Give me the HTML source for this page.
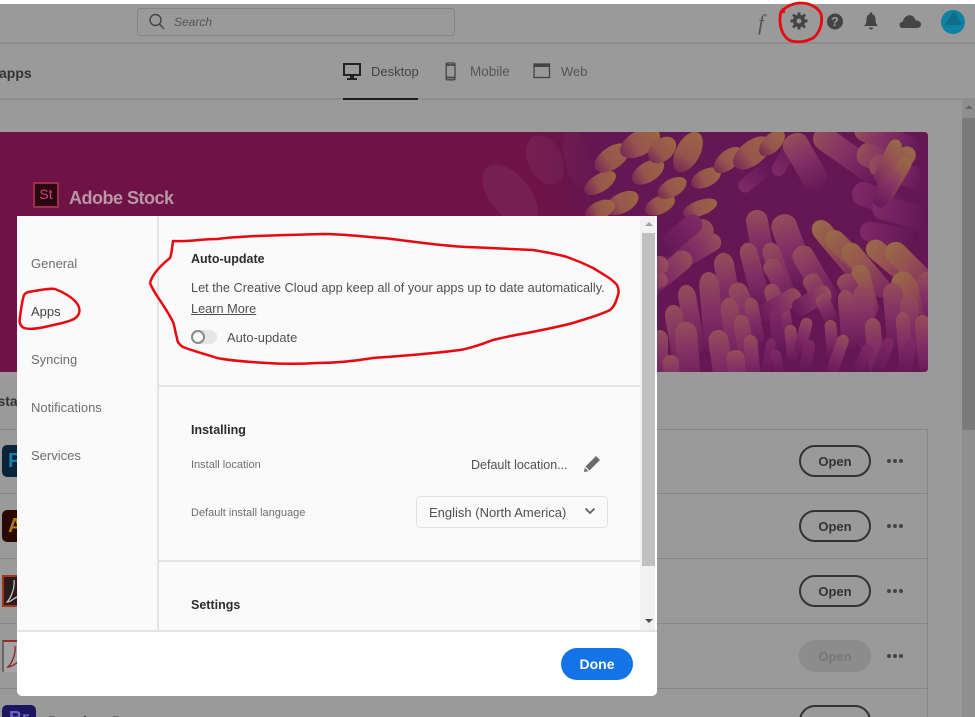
<!DOCTYPE html>
<html lang="en"><head><meta charset="utf-8"><title>Creative Cloud preferences</title>
<style>
html,body{margin:0;padding:0;width:975px;height:717px;overflow:hidden}
#w{width:975px;height:717px;position:relative;overflow:hidden;background:#9a9a9a;font-family:"Liberation Sans",sans-serif;color:#444}
.a{position:absolute}
.t{position:absolute;white-space:nowrap;line-height:16px}
.open{position:absolute;left:799px;width:68px;height:28px;border:2px solid #333;border-radius:16px;text-align:center;font:bold 13px/29px "Liberation Sans",sans-serif;color:#333}
.dots{position:absolute;left:887px;width:18px;height:4px}
.dots i{float:left;width:4px;height:4px;border-radius:50%;background:#444;margin-right:2px}
.rl{position:absolute;left:0;width:927px;height:1px;background:#868686}
.nav{position:absolute;left:31px;font-size:13px;color:#6e6e6e;line-height:16px}
</style></head><body><div id="w">
<div class="a" style="left:0;top:0;width:975px;height:4px;background:#fff"></div>
<div class="a" style="left:0;top:42px;width:975px;height:2px;background:#8d8d8d"></div>
<div class="a" style="left:0;top:98px;width:975px;height:2px;background:#8d8d8d"></div>
<div class="a" style="left:137px;top:8px;width:316px;height:26px;border:1px solid #858585;border-radius:4px"></div>
<svg class="a" style="left:149px;top:13px" width="16" height="17" viewBox="0 0 16 17" fill="none" stroke="#444" stroke-width="1.400"><circle cx="6.500" cy="7" r="5.500"/><path d="M10.500 11l4.500 5"/></svg>
<div class="t" style="left:174px;top:14px;font-size:12px;font-style:italic;color:#555">Search</div>

<svg class="a" style="left:750px;top:5px" width="225" height="36" viewBox="750 5 225 36">
<text x="758" y="30" font-family="Liberation Serif,serif" font-style="italic" font-size="22" fill="#555">f</text>
<g fill="#444"><circle cx="799" cy="21" r="6.200"/><path d="M797.500 12.500h3v3h-3zM797.500 26.500h3v3h-3zM790.500 19.500h3v3h-3zM804.500 19.500h3v3h-3z"/><path d="M792 15.500l2-2 3 3-2 2zM804 13.500l2 2-3 3-2-2zM794 28.500l-2-2 3-3 2 2zM806 26.500l-2 2-3-3 2-2z"/></g>
<circle cx="799" cy="21" r="2.400" fill="#999"/>
<circle cx="835" cy="21.500" r="8" fill="#444"/>
<text x="835" y="26" font-size="12.500" font-weight="bold" text-anchor="middle" fill="#999" font-family="Liberation Sans,sans-serif">?</text>
<path fill="#444" d="M871 14c3.500 0 4.500 2.500 4.500 5.500 0 3.500 1 5 2.500 6.500h-14c1.500-1.500 2.500-3 2.500-6.500 0-3 1-5.500 4.500-5.500zM869.800 13.500a1.200 1.200 0 1 1 2.400 0v1h-2.400zM869 27.500h4a2 2 0 0 1-4 0z"/>
<path fill="#444" d="M903 28c-2.500 0-3.500-1.500-3.500-3.300 0-1.800 1.500-3 3.300-3 .8-3.800 3.500-6.500 6.700-6.500 3.300 0 5.500 2.500 6.300 5.300 2.600-.2 5.200 1 5.200 3.800 0 2.300-1.500 3.700-3.800 3.700z"/>
<circle cx="953" cy="22" r="12" fill="#0d82a2"/>
<path d="M954 11l8.500 14h-18z" fill="#0c6f88"/>
</svg>

<div class="t" style="left:-1px;top:65px;font-size:14px;font-weight:bold;color:#333">apps</div>
<svg class="a" style="left:343px;top:62px" width="20" height="20" viewBox="0 0 20 20"><path fill="#222" d="M0 1h18v13H11v2h3v2H4v-2h3v-2H0zM2 3v9h14V3z"/></svg>
<div class="t" style="left:371px;top:64px;font-size:13px;color:#444">Desktop</div>
<div class="a" style="left:343px;top:98px;width:75px;height:2px;background:#1c1c1c"></div>
<svg class="a" style="left:445px;top:62px" width="12" height="19" viewBox="0 0 12 19" fill="none" stroke="#444" stroke-width="1.300"><rect x="1.200" y="1" width="8.800" height="16.800" rx="1"/><path d="M1 3h9M1 15.500h9" stroke-width="1.800"/></svg>
<div class="t" style="left:470px;top:64px;font-size:13.500px;color:#555">Mobile</div>
<svg class="a" style="left:533px;top:63px" width="18" height="16" viewBox="0 0 18 16" fill="none" stroke="#444" stroke-width="1.300"><rect x="1" y="1" width="15.500" height="13.500"/><path d="M1 2.500h15.500" stroke-width="3"/></svg>
<div class="t" style="left:561px;top:64px;font-size:13px;color:#555">Web</div>

<div class="a" style="left:962px;top:100px;width:13px;height:617px;background:#8f8f8f"></div>
<div class="a" style="left:962px;top:118px;width:13px;height:312px;background:#7a7a7a"></div>
<div class="a" style="left:965px;top:105px;width:0;height:0;border:4px solid transparent;border-bottom:4px solid #666;border-top:0"></div>

<svg class="a" style="left:0;top:132px" width="928" height="240" viewBox="0 132 928 240">
<defs>
<clipPath id="hc"><rect x="-5" y="132" width="933" height="240" rx="4"/></clipPath>
<linearGradient id="go" x1="0" y1="0" x2="0" y2="1"><stop offset="0" stop-color="#a5763e"/><stop offset=".6" stop-color="#a0624a"/><stop offset="1" stop-color="#7a2b55"/></linearGradient>
<linearGradient id="gm" x1="0" y1="0" x2="0" y2="1"><stop offset="0" stop-color="#9e5a58"/><stop offset=".45" stop-color="#873468"/><stop offset="1" stop-color="#641758"/></linearGradient>
<linearGradient id="gy" x1="0" y1="0" x2="0" y2="1"><stop offset="0" stop-color="#a27c42"/><stop offset=".4" stop-color="#9f5e50"/><stop offset="1" stop-color="#7a2560"/></linearGradient>
<linearGradient id="gp" x1="0" y1="0" x2="0" y2="1"><stop offset="0" stop-color="#842c6a"/><stop offset="1" stop-color="#5a1252"/></linearGradient>
<linearGradient id="fd" gradientUnits="userSpaceOnUse" x1="535" y1="0" x2="600" y2="0"><stop offset="0" stop-color="#fff" stop-opacity="0"/><stop offset="1" stop-color="#fff"/></linearGradient>
<mask id="mk"><rect x="0" y="132" width="928" height="240" fill="url(#fd)"/></mask>
<ellipse id="o" cx="0" cy="0" rx="11" ry="20" fill="url(#go)"/>
<rect id="m" x="-10" y="0" width="20" height="60" rx="10" fill="url(#gm)"/>
<rect id="y" x="-10" y="0" width="20" height="60" rx="10" fill="url(#gy)"/>
<rect id="p" x="-10" y="0" width="20" height="60" rx="10" fill="url(#gp)"/>
</defs>
<rect x="-5" y="132" width="933" height="240" rx="4" fill="#6f1347"/>
<g clip-path="url(#hc)">
<g fill="#7a2656" opacity=".7"><ellipse transform="rotate(-25 545 160)" cx="545" cy="160" rx="17" ry="26"/><ellipse transform="rotate(-15 578 160)" cx="578" cy="160" rx="13" ry="30"/><ellipse transform="rotate(-40 510 195)" cx="510" cy="195" rx="20" ry="36"/></g>
<g mask="url(#mk)">
<rect x="440" y="132" width="490" height="240" fill="#611450"/>
<use href="#o" transform="translate(600 183) rotate(58) scale(.8 .9)"/><use href="#o" transform="translate(612 158) rotate(55)"/><use href="#o" transform="translate(640 143) rotate(60) scale(1.100)"/><use href="#o" transform="translate(648 172) rotate(58) scale(.9)"/><use href="#o" transform="translate(622 203) rotate(62) scale(.9)"/>
<use href="#o" transform="translate(600 210) rotate(65) scale(.8)"/><use href="#o" transform="translate(660 205) rotate(65) scale(.8)"/>
<use href="#o" transform="translate(662 150) rotate(50) scale(1 .8)"/><use href="#o" transform="translate(688 152) rotate(28) scale(1.100)"/><use href="#o" transform="translate(672 188) rotate(60) scale(.8)"/><use href="#o" transform="translate(706 178) rotate(64) scale(.8)"/><use href="#o" transform="translate(728 160) rotate(50) scale(.85)"/><use href="#o" transform="translate(752 153) rotate(52) scale(1.100)"/><use href="#o" transform="translate(772 143) rotate(45) scale(.8)"/><use href="#o" transform="translate(700 208) rotate(70) scale(.7 .9)"/>
<use href="#p" transform="translate(740 190) rotate(-130) scale(.7)"/><use href="#p" transform="translate(775 175) rotate(-150) scale(.7)"/>
<use href="#m" transform="translate(790 135) rotate(-30) scale(1.300 1)"/><use href="#m" transform="translate(815 132) rotate(-55) scale(1.200 1.300)"/><use href="#m" transform="translate(858 150) rotate(-65) scale(1.200 1)"/><use href="#m" transform="translate(855 127) rotate(-70) scale(1.100)"/><use href="#p" transform="translate(853 190) rotate(-70) scale(1.200 1)"/><use href="#m" transform="translate(870 162) rotate(-70) scale(1.100 .9)"/><use href="#p" transform="translate(873 205) rotate(-75) scale(1.200 1)"/><use href="#y" transform="translate(898 140) rotate(25) scale(.7 .8)"/><use href="#y" transform="translate(912 148) rotate(35) scale(.9 .9)"/><use href="#y" transform="translate(908 158) rotate(30) scale(.7 .8)"/><use href="#m" transform="translate(898 170) rotate(30) scale(.7 .7)"/><use href="#p" transform="translate(860 230) rotate(-80) scale(1)"/>
<use href="#m" transform="translate(780 215) rotate(-20) scale(1.300 1.200)"/><use href="#m" transform="translate(755 210) rotate(-10) scale(1.100)"/><use href="#m" transform="translate(712 225) rotate(60) scale(1.100 1)"/><use href="#p" transform="translate(700 218) rotate(50) scale(1 .9)"/>
<use href="#y" transform="translate(815 222) rotate(-40) scale(1 1.200)"/><use href="#y" transform="translate(828 233) rotate(-45) scale(1 1.100)"/><use href="#m" transform="translate(768 243) rotate(-20) scale(.9 1.100)"/><use href="#m" transform="translate(746 243) rotate(-15) scale(.9 1.100)"/><use href="#m" transform="translate(720 238) rotate(60) scale(.9 .9)"/><use href="#y" transform="translate(868 243) rotate(-50) scale(1 1.100)"/><use href="#y" transform="translate(845 245) rotate(-40) scale(1 1.100)"/><use href="#y" transform="translate(888 245) rotate(-45) scale(1.100)"/>
<use href="#m" transform="translate(798 247) rotate(-30) scale(1.100)"/><use href="#m" transform="translate(768 260) rotate(-30) scale(.9 .8)"/><use href="#m" transform="translate(722 253) rotate(-10) scale(1 1.200)"/><use href="#m" transform="translate(690 254) rotate(50) scale(1 1)"/><use href="#m" transform="translate(668 262) rotate(70) scale(.9 .8)"/><use href="#y" transform="translate(858 265) rotate(-15) scale(.9)"/><use href="#y" transform="translate(895 275) rotate(-45) scale(1.100 .9)"/><use href="#m" transform="translate(925 272) rotate(-10) scale(.9)"/><use href="#m" transform="translate(808 275) rotate(-30) scale(.9 .7)"/><use href="#m" transform="translate(842 275) rotate(-30) scale(.9 .7)"/>
<use href="#m" transform="translate(708 272) rotate(-5) scale(1 1.400)"/><use href="#m" transform="translate(735 283) rotate(-20) scale(1 1.100)"/><use href="#m" transform="translate(685 285) rotate(-10) scale(.9 1.200)"/><use href="#m" transform="translate(667 277) rotate(65) scale(.7 .6)"/><use href="#m" transform="translate(770 284) rotate(-15) scale(.8 .9)"/><use href="#m" transform="translate(862 285) rotate(-5) scale(1 1.100)"/><use href="#m" transform="translate(892 283) rotate(-5) scale(1 1.100)"/><use href="#m" transform="translate(908 295) rotate(-5) scale(.9 1.100)"/><use href="#m" transform="translate(845 290) rotate(-5) scale(.8 1)"/><use href="#m" transform="translate(780 300) rotate(-10) scale(.8 .7)"/><use href="#m" transform="translate(800 293) rotate(60) scale(.9 .8)"/><use href="#m" transform="translate(830 290) rotate(60) scale(.9 .7)"/><use href="#m" transform="translate(820 295) rotate(-25) scale(.7 .5)"/>
<use href="#m" transform="translate(728 298) rotate(-8) scale(.9 1.200)"/><use href="#m" transform="translate(672 305) rotate(-10) scale(.9 1.200)"/><use href="#m" transform="translate(750 298) rotate(-10) scale(.7 .8)"/><use href="#p" transform="translate(775 310) rotate(-5) scale(.6 .8)"/><use href="#m" transform="translate(790 325) rotate(-5) scale(.6 .6)"/><use href="#m" transform="translate(808 318) rotate(15) scale(.6 .6)"/><use href="#m" transform="translate(830 320) rotate(-5) scale(.6 .6)"/><use href="#m" transform="translate(872 318) rotate(-5) scale(.8 1)"/><use href="#m" transform="translate(922 315) rotate(-5) scale(.8 1)"/><use href="#m" transform="translate(902 312) rotate(-5) scale(.7 1)"/>
<use href="#m" transform="translate(685 322) rotate(-5) scale(1.100 1.100)"/><use href="#m" transform="translate(717 330) rotate(-8) scale(1 1.100)"/><use href="#m" transform="translate(740 315) rotate(-10) scale(.8 1)"/><use href="#m" transform="translate(660 330) rotate(0) scale(.8 1)"/><use href="#m" transform="translate(670 355) rotate(-5) scale(.8 .7)"/><use href="#m" transform="translate(735 350) rotate(-5) scale(.9 .7)"/><use href="#m" transform="translate(750 335) rotate(-5) scale(.7 .8)"/>
<use href="#p" transform="translate(772 338) rotate(10) scale(.5 .7)"/><use href="#p" transform="translate(775 350) rotate(-12) scale(.5 .5)"/><use href="#p" transform="translate(810 340) rotate(10) scale(.6 .6)"/><use href="#m" transform="translate(845 335) rotate(20) scale(.6 .7)"/><use href="#p" transform="translate(870 345) rotate(25) scale(.6 .6)"/><use href="#p" transform="translate(890 338) rotate(20) scale(.6 .7)"/><use href="#p" transform="translate(912 340) rotate(15) scale(.6 .7)"/>
<rect x="440" y="132" width="490" height="240" fill="#742458" opacity=".2"/>
</g></g>
</svg>

<div class="a" style="left:33px;top:182px;width:22px;height:22px;border:2px solid #9c2f4e;background:#2c0513;color:#c9476f;font-size:14px;line-height:21px;text-align:center">St</div>
<div class="t" style="left:69px;top:187px;font-size:18px;line-height:22px;font-weight:bold;color:#b896a8;letter-spacing:-.5px">Adobe Stock</div>

<div class="t" style="left:-15px;top:393px;font-size:14px;font-weight:bold;color:#333">Insta</div>
<div class="rl" style="top:429px"></div>
<div class="rl" style="top:493px"></div>
<div class="rl" style="top:558px"></div>
<div class="rl" style="top:623px"></div>
<div class="rl" style="top:688px"></div>
<div class="a" style="left:927px;top:429px;width:1px;height:288px;background:#868686"></div>

<div class="a" style="left:2px;top:445px;width:34px;height:32px;border-radius:5px;background:#0b2538;color:#2078b0;font:bold 20px/32px 'Liberation Sans',sans-serif;padding-left:6px;box-sizing:border-box">P</div>
<div class="a" style="left:2px;top:510px;width:34px;height:32px;border-radius:5px;background:#2a0a00;color:#b07a12;font:bold 20px/32px 'Liberation Sans',sans-serif;padding-left:6px;box-sizing:border-box">A</div>
<div class="a" style="left:2px;top:575px;width:30px;height:28px;border:2px solid #a8321c;background:#2b1c1c"></div>
<svg class="a" style="left:6px;top:578px" width="12" height="28" viewBox="0 0 12 28" fill="none" stroke="#ccc" stroke-width="1.200"><path d="M8 2c1 8-3 18-7 22 4 0 7-4 10-5"/></svg>
<div class="a" style="left:2px;top:640px;width:30px;height:30px;border-top:2px solid #9a2a2a;border-left:2px solid #666;background:#a5a5a5"></div>
<svg class="a" style="left:6px;top:645px" width="12" height="26" viewBox="0 0 12 26" fill="none" stroke="#8c2a2a" stroke-width="1.400"><path d="M9 1c1 8-3 17-7 21 4 0 7-3 10-5"/></svg>
<div class="a" style="left:2px;top:705px;width:34px;height:32px;border-radius:5px;background:#1d1560;color:#6a63c8;font:bold 18px/26px 'Liberation Sans',sans-serif;text-align:center">Br</div>
<div class="t" style="left:48px;top:713px;font-size:14px;font-weight:bold;color:#333">Premiere Pro</div>

<div class="open" style="top:445px">Open</div>
<div class="open" style="top:510px">Open</div>
<div class="open" style="top:575px">Open</div>
<div class="open" style="top:640px;border-color:#8c8c8c;background:#8c8c8c;color:#777">Open</div>
<div class="open" style="top:705px">Open</div>
<div class="dots" style="top:459px"><i></i><i></i><i></i></div>
<div class="dots" style="top:524px"><i></i><i></i><i></i></div>
<div class="dots" style="top:589px"><i></i><i></i><i></i></div>
<div class="dots" style="top:654px"><i></i><i></i><i></i></div>

<!-- modal -->
<div class="a" style="left:17px;top:216px;width:640px;height:480px;background:#fff;border-radius:0 0 5px 5px"></div>
<div class="a" style="left:17px;top:216px;width:623px;height:414px;background:#fafafa"></div>
<div class="a" style="left:157px;top:216px;width:2px;height:414px;background:#e4e4e4"></div>
<div class="a" style="left:17px;top:630px;width:640px;height:2px;background:#e4e4e4"></div>
<div class="a" style="left:159px;top:385px;width:481px;height:2px;background:#e4e4e4"></div>
<div class="a" style="left:159px;top:560px;width:481px;height:2px;background:#e4e4e4"></div>
<div class="a" style="left:640px;top:216px;width:15px;height:414px;background:#f1f1f1"></div>
<div class="a" style="left:642px;top:233px;width:13px;height:333px;background:#c1c1c1"></div>
<div class="a" style="left:645px;top:222px;width:0;height:0;border:4px solid transparent;border-bottom:4px solid #a3a3a3;border-top:0"></div>
<div class="a" style="left:645px;top:619px;width:0;height:0;border:4px solid transparent;border-top:4px solid #505050;border-bottom:0"></div>

<div class="nav" style="top:256px">General</div>
<div class="nav" style="top:304px;color:#444">Apps</div>
<div class="nav" style="top:352px">Syncing</div>
<div class="nav" style="top:400px">Notifications</div>
<div class="nav" style="top:448px">Services</div>

<div class="t" style="left:191px;top:251px;font-size:12.500px;font-weight:bold;color:#2c2c2c">Auto-update</div>
<div class="t" style="left:191px;top:280px;font-size:12.750px;color:#505050">Let the Creative Cloud app keep all of your apps up to date automatically.</div>
<div class="t" style="left:191px;top:301px;font-size:12.750px;color:#505050;text-decoration:underline">Learn More</div>
<div class="a" style="left:191px;top:330px;width:26px;height:14px;border-radius:7px;background:#e6e6e6"></div>
<div class="a" style="left:191px;top:330px;width:10px;height:10px;border:2px solid #8a8a8a;border-radius:50%;background:#fafafa"></div>
<div class="t" style="left:227px;top:330px;font-size:12.900px;color:#505050">Auto-update</div>

<div class="t" style="left:191px;top:422px;font-size:12.500px;font-weight:bold;color:#2c2c2c">Installing</div>
<div class="t" style="left:191px;top:457px;font-size:11px;color:#6e6e6e">Install location</div>
<div class="t" style="left:471px;top:457px;font-size:12.500px;color:#505050">Default location...</div>
<svg class="a" style="left:583px;top:455px" width="18" height="18" viewBox="0 0 18 18"><path fill="#6a6a6a" d="M13 1l4 4L6.500 15.500l-4-4zM1.800 12.500l3.700 3.700L1 17z"/></svg>
<div class="t" style="left:191px;top:505px;font-size:11px;color:#6e6e6e">Default install language</div>
<div class="a" style="left:416px;top:496px;width:190px;height:30px;border:1px solid #e2e2e2;border-radius:4px"></div>
<div class="t" style="left:429px;top:505px;font-size:13px;color:#505050">English (North America)</div>
<svg class="a" style="left:584px;top:507px" width="12" height="9" viewBox="0 0 12 9" fill="none" stroke="#606060" stroke-width="1.800"><path d="M1.500 1.500L6 6l4.500-4.500"/></svg>
<div class="t" style="left:191px;top:597px;font-size:12.500px;font-weight:bold;color:#2c2c2c">Settings</div>

<div class="a" style="left:561px;top:648px;width:72px;height:32px;border-radius:16px;background:#1473e6;color:#fff;font:bold 14px/32px 'Liberation Sans',sans-serif;text-align:center">Done</div>

<!-- red annotations -->
<svg class="a" style="left:0;top:0" width="975" height="717" viewBox="0 0 975 717" fill="none" stroke="#e8080f" stroke-width="2.200" stroke-linejoin="round" stroke-linecap="round">
<path d="M173 241C190 242 200 239 217 239C240 236 283 235 323 234C345 234 365 237 383 238C410 241 440 246 467 247C490 248 515 249 533 250C545 252 557 254 567 257C578 261 585 264 593 268C603 274 612 279 617 285C619 289 619 292 618 295C616 302 614 307 610 310C598 316 585 319 573 323C558 327 542 330 527 333C515 335 505 337 493 340C482 344 472 348 460 350C430 354 400 356 373 358C355 361 335 363 317 363C300 364 283 364 267 363C250 362 233 361 217 358C205 354 193 351 183 347C178 344 177 341 177 338C175 332 175 327 173 322C170 316 167 311 163 305C158 297 153 291 150 283C152 275 160 266 170 258C172 253 172 247 173 241Z" stroke-width="2.500"/>
<path d="M781 12C786 6 794 3 801 3C809 3 818 7 821 14C823 22 820 33 813 38C806 42 796 43 789 40C783 36 780 28 780 20C780 17 780 14 781 12Z" stroke-width="2.800"/>
<path d="M781 12l2-3 1 3z" fill="#e8080f"/>
<path d="M24 295C27 291 31 292 34 291C41 290 50 288 55 289C63 292 74 298 78 305C81 311 79 316 74 319C66 323 57 324 49 326C41 328 30 330 24 328C20 326 19 322 20 317C21 309 22 301 24 295Z" stroke-width="2.500"/>
</svg>
</div></body></html>
